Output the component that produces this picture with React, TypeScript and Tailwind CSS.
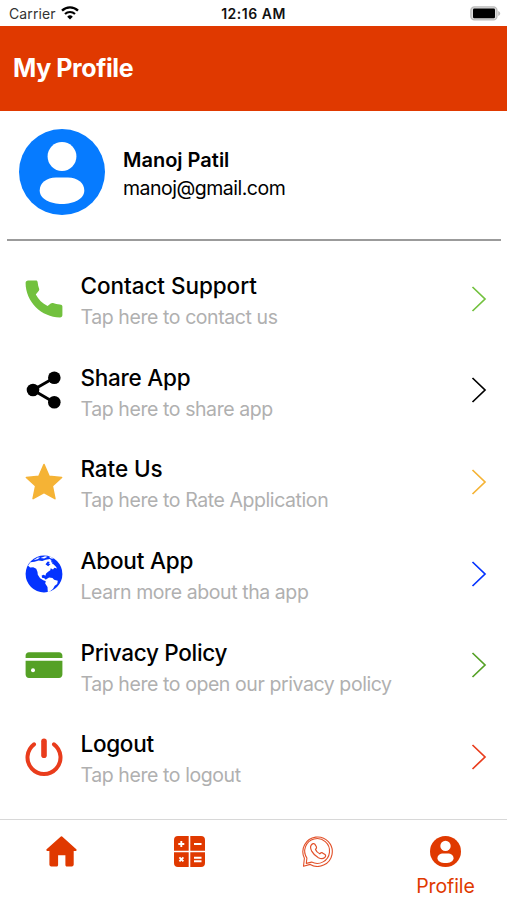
import React from 'react';

interface MenuItem {
  title: string;
  subtitle: string;
  arrow: string;
  tracking: string;
  icon: React.ReactNode;
}

const PhoneIcon = () => (
  <svg viewBox="0 0 38 38" className="w-[38px] h-[38px]" fill="#72c13e">
    <path d="M3.200.4H11c1 0 1.500.6 1.600 1.500.3 2.600.8 4.800 1.500 6.900.3.8.1 1.700-.5 2.300L10.800 14.600c2.700 5.200 6.500 8.800 11.800 11.500l3.100-2.500c.6-.6 1.500-.8 2.300-.5 2.200.7 4.300 1.200 6.900 1.400 1.500.1 2.500.8 2.500 2V35c0 1.500-.9 2.400-2.400 2.400C16.500 37.400.6 21.500.6 3 .6 1.300 1.500.4 3.200.4Z" />
  </svg>
);

const ShareIcon = () => (
  <svg viewBox="0 0 38 38" className="w-[38px] h-[38px]" fill="#000">
    <path d="M29.300 6.700 8 19l21.300 12.400" fill="none" stroke="#000" strokeWidth="2.900" />
    <circle cx="29.300" cy="6.700" r="6.300" />
    <circle cx="8" cy="19" r="6.300" />
    <circle cx="29.300" cy="31.300" r="6.300" />
  </svg>
);

const StarIcon = () => (
  <svg viewBox="0 0 38 38" className="w-[38px] h-[38px]">
    <path d="m19 1.600 5.100 11.600 12.500 1.300-9.300 8.500 2.600 12.600L19 29.600 8.100 35.600l2.600-12.600L1.400 14.500l12.500-1.300Z" fill="#f5b335" stroke="#f5b335" strokeWidth="1.600" strokeLinejoin="round" />
  </svg>
);

const EarthIcon = () => (
  <svg viewBox="0 0 38 38" className="w-[38px] h-[38px]">
    <circle cx="19" cy="19" r="18.400" fill="#0433ff" />
    <g fill="#fff">
      <path d="M3 10.600 5.500 7.300l4-.5 4.200-1.200 3.500.5 3.500-1.300 4.300-.7 1.800 2 1.400 3 2.800 2.700 1 1.600-2.600-.6-1.400 1.800-2.300-1.300-.4 2-2.200 1.500-2 1.700-.7 2.200-1.700-1-2 .9.3 2.200 2.300.5 1.600 1.400 2 .9-1 .9-3.600-1.300-3.200-2-2.300-3.500-.3-2.700-1.300-3.200-3-1.600-3.100.4Z" />
      <path d="m21.200 24.200 2.900-1.700 3.400.6 1.600 1.600 3.700 1-.6 3.200-2.500 1.900-1.800 3.300-3.500 2.600-1.600.4-.3-5.200-2.300-3.400Z" />
      <path d="m8.500 5.300 4.200-2.700 2.500-.2-2.700 1.800Zm7-2.200 4.600-1.800 2.500.5-3.400 1.600Zm8.300-1.300 2.300.3 2.600 1.700-2.800-.3Z" />
    </g>
    <path d="m20.500 9.200 2.200-2.800 2.200.7-1.400 1.500 2 .5-2.300 2.200Z" fill="#0433ff" />
    <path d="m26.200 5.600 1.800 3.600" stroke="#0433ff" strokeWidth=".8" />
  </svg>
);

const CardIcon = () => (
  <svg viewBox="0 0 38 38" className="w-[38px] h-[38px]">
    <path d="M.6 12V9.600c0-2 1.400-3.400 3.400-3.400h30c2 0 3.400 1.400 3.400 3.400V12H.6ZM.6 14.800h36.800v13.700c0 2-1.400 3.400-3.400 3.400H4c-2 0-3.400-1.400-3.400-3.400Z" fill="#55a126" />
    <circle cx="8" cy="24.200" r="2" fill="#fff" />
  </svg>
);

const PowerIcon = () => (
  <svg viewBox="0 0 38 38" className="w-[38px] h-[38px]" fill="none" stroke="#e93c1c" strokeLinecap="round">
    <path d="M9 6.300a16.500 16.500 0 1 0 20 0" strokeWidth="4" />
    <path d="M19 3.300v14" strokeWidth="5.600" />
  </svg>
);

const UserIcon = ({ className }: { className: string }) => (
  <svg viewBox="0 0 86 86" className={className}>
    <circle cx="43" cy="43" r="43" fill="currentColor" />
    <circle cx="43" cy="27.500" r="14.400" fill="#fff" />
    <path d="M37 48.500h12c9.500 0 16.300 5.500 16.300 13C65.300 70 54.500 75 43 75s-22.300-5-22.300-13.500c0-7.500 6.800-13 16.300-13Z" fill="#fff" />
  </svg>
);

const HomeIcon = () => (
  <svg viewBox="0 0 31 31" className="w-[31px] h-[31px]" fill="#e03900">
    <path d="M14.300.9a1.800 1.800 0 0 1 2.400 0L30.300 13.300c.7.700.3 1.700-.6 1.700h-2v13.600c0 1.100-.7 1.800-1.800 1.800h-5c-.9 0-1.500-.6-1.500-1.500V19.300h-7.300v9.600c0 .9-.6 1.500-1.500 1.500H5.200c-1.100 0-1.800-.7-1.800-1.800V15H1.200c-.9 0-1.300-1-.6-1.700Z" />
  </svg>
);

const CalculatorIcon = () => (
  <svg viewBox="0 0 31 31" className="w-[31px] h-[31px]">
    <path d="M4 0h10.700v14.700H0V4a4 4 0 0 1 4-4Zm12.300 0H27a4 4 0 0 1 4 4v10.700H16.300ZM0 16.300h14.700V31H4a4 4 0 0 1-4-4Zm16.300 0H31V27a4 4 0 0 1-4 4H16.300Z" fill="#e03900" />
    <path d="M7.300 5v6M4.300 8h6M20 8h7.500M5.400 21.300l4 4m0-4-4 4M20 21.700h7.500M20 25.300h7.500" fill="none" stroke="#fff" strokeWidth="1.900" />
  </svg>
);

const WhatsappIcon = () => (
  <svg viewBox="0 0 31 31" className="w-[31px] h-[31px]" fill="none" stroke="#e2512a" strokeWidth="1.100" strokeLinejoin="round">
    <path d="M2.400 22.200A14.700 14.700 0 1 1 8.200 28.400L1.500 30.300Z" />
    <path d="M4.900 22A12.400 12.400 0 1 1 9.600 26.100L4.300 27.400Z" />
    <path
      strokeWidth="1.200"
      d="M9.200 9.100c1.200-1.600 2.700-2 3.600-1l1.600 2.700c.6 1-.2 2-.9 2.700.7 1.800 2.300 3.400 4.300 4.300.8-.8 1.600-1.500 2.700-.9l2.500 1.600c1.100.9.700 2.200-.6 3.300-1.500 1.300-4 .9-6-.1-3-1.600-5.200-3.900-6.700-6.600-1-2-1.700-4.300-.5-6Z"
    />
  </svg>
);

const WifiIcon = () => (
  <svg viewBox="0 0 18 14" className="w-[18px] h-[14px]" fill="none" stroke="#000">
    <path d="M1 4.600a11.600 11.600 0 0 1 16 0" strokeWidth="2.400" />
    <path d="M4 8a7.200 7.200 0 0 1 10 0" strokeWidth="2.200" />
    <path d="M9 13.500 6.200 10.700a4 4 0 0 1 5.600 0Z" fill="#000" stroke="none" />
  </svg>
);

const BatteryIcon = () => (
  <svg viewBox="0 0 31 15" className="w-[31px] h-[15px]">
    <rect x=".9" y=".9" width="26" height="13" rx="3.500" fill="#ddd" stroke="#bbb" strokeWidth="1.400" />
    <rect x="3" y="2.600" width="22" height="9.600" rx="1.200" fill="#000" />
    <path d="M28.200 5c1.200.4 2 1.300 2 2.500s-.8 2.100-2 2.500Z" fill="#bbb" />
  </svg>
);

const Chevron = ({ color }: { color: string }) => (
  <svg viewBox="0 0 16 26" className="w-4 h-[26px]" fill="none" stroke={color} strokeWidth="1.700">
    <path d="M1.500 1 14 13 1.500 25" />
  </svg>
);

const MENU: MenuItem[] = [
  { title: 'Contact Support', subtitle: 'Tap here to contact us', arrow: '#72c13e', tracking: 'tracking-[-0.05px]', icon: <PhoneIcon /> },
  { title: 'Share App', subtitle: 'Tap here to share app', arrow: '#000', tracking: 'tracking-[-0.25px]', icon: <ShareIcon /> },
  { title: 'Rate Us', subtitle: 'Tap here to Rate Application', arrow: '#f5b335', tracking: 'tracking-[-0.1px]', icon: <StarIcon /> },
  { title: 'About App', subtitle: 'Learn more about tha app', arrow: '#0433ff', tracking: 'tracking-[-0.2px]', icon: <EarthIcon /> },
  { title: 'Privacy Policy', subtitle: 'Tap here to open our privacy policy', arrow: '#55a126', tracking: 'tracking-[-0.3px]', icon: <CardIcon /> },
  { title: 'Logout', subtitle: 'Tap here to logout', arrow: '#e93c1c', tracking: 'tracking-[-0.3px]', icon: <PowerIcon /> },
];

const TABS = [
  { key: 'home', label: '', icon: <HomeIcon /> },
  { key: 'calculator', label: '', icon: <CalculatorIcon /> },
  { key: 'chat', label: '', icon: <WhatsappIcon /> },
  { key: 'profile', label: 'Profile', icon: <UserIcon className="w-[31px] h-[31px]" /> },
];

export default function App() {
  return (
    <div className="flex flex-col w-[507px] h-[900px] overflow-hidden bg-white text-black font-['Inter',sans-serif]">
      {/* Status bar */}
      <div className="grid grid-cols-3 items-center h-[26px] flex-shrink-0 pl-[9px] pr-[6px] text-[14px]">
        <div className="flex items-center gap-[5px] text-[#333]">
          <span className="tracking-[0.1px]">Carrier</span>
          <WifiIcon />
        </div>
        <span className="pt-px pr-[3px] text-center font-semibold tracking-[0.5px] text-[#111]">12:16 AM</span>
        <div className="flex justify-end">
          <BatteryIcon />
        </div>
      </div>

      {/* Header */}
      <header className="flex items-center h-[85px] flex-shrink-0 px-[13px] pt-px bg-[#e03900]">
        <h1 className="text-[25px] font-bold tracking-[-0.4px] text-white">My Profile</h1>
      </header>

      {/* User */}
      <section className="flex items-center gap-[18px] h-[130px] flex-shrink-0 ml-[7px] mr-[6px] pl-3 pb-[6px] border-b-2 border-[#9b9b9b]">
        <UserIcon className="w-[86px] h-[86px] text-[#067bff]" />
        <div className="pt-1 text-[20px] leading-7">
          <div className="font-semibold">Manoj Patil</div>
          <div className="text-[19.500px] tracking-[-0.5px]">manoj@gmail.com</div>
        </div>
      </section>

      {/* Menu */}
      <main className="flex flex-col flex-1 pt-[12px]">
        {MENU.map(item => (
          <div key={item.title} className="flex items-center h-[91.6px] flex-shrink-0 pl-[24.500px] pr-[20.500px]">
            {item.icon}
            <div className="flex-1 pl-[18px] pt-[9px]">
              <div className={`text-[22.500px] leading-[29px] font-medium ${item.tracking}`}>{item.title}</div>
              <div className="text-[19.500px] leading-[35px] tracking-[-0.42px] text-[#b0b0b0]">{item.subtitle}</div>
            </div>
            <Chevron color={item.arrow} />
          </div>
        ))}
      </main>

      {/* Tabs */}
      <nav className="flex justify-between h-[81px] flex-shrink-0 pl-[25.500px] pr-[25.500px] pt-[16px] border-t border-[#d8d8d8] text-[#e03900]">
        {TABS.map(tab => (
          <div key={tab.key} className="flex flex-col items-center w-[72px]">
            {tab.icon}
            {tab.label && <span className="mt-[5px] text-[19.500px] leading-7 tracking-[-0.1px]">{tab.label}</span>}
          </div>
        ))}
      </nav>
    </div>
  );
}
